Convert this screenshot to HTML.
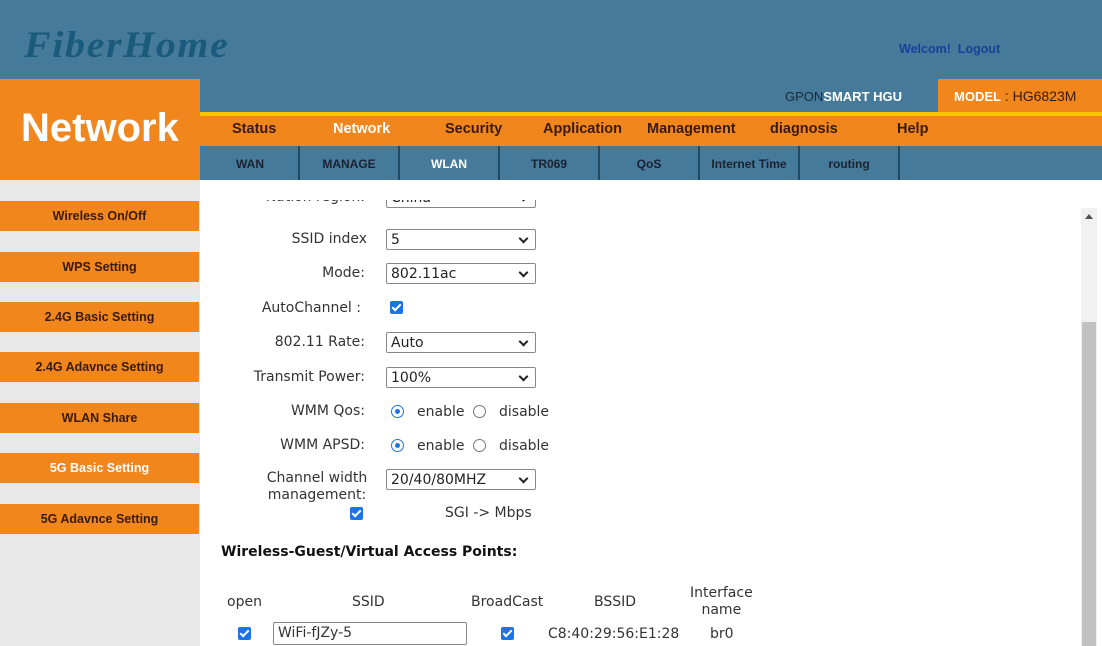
<!DOCTYPE html>
<html><head><meta charset="utf-8"><style>
*{margin:0;padding:0;box-sizing:border-box}
html,body{width:1102px;height:646px;overflow:hidden}
body{position:relative;background:#fff;font-family:"DejaVu Sans","Liberation Sans",sans-serif;}
.a{position:absolute}
.hdr{left:0;top:0;width:1102px;height:180px;background:#467a9b}
.logo{left:24px;top:24px;font-family:"Liberation Serif",serif;font-style:italic;font-weight:bold;font-size:37px;color:#1a5a7a;letter-spacing:1.5px;transform:scaleX(1.08);transform-origin:left}
.b{font-family:"Liberation Sans",sans-serif;font-weight:bold}
.menu{top:112px;left:200px;width:902px;height:34px;background:#f0861c;border-top:4px solid #f7c600}
.mi{top:121px;font-size:14.5px;color:#3a1a08;font-family:"Liberation Sans",sans-serif;font-weight:bold}
.sub{top:146px;left:200px;width:902px;height:34px;background:#467a9b}
.sd{top:146px;width:2px;height:34px;background:#1e4a66}
.si{top:157px;font-size:12px;color:#1a2230;font-family:"Liberation Sans",sans-serif;font-weight:bold;text-align:center;width:100px}
.side{left:0;top:180px;width:200px;height:466px;background:#e8e8e8}
.btn{left:0;width:199px;height:30px;background:#f0861c;color:#3a1a08;font-family:"Liberation Sans",sans-serif;font-weight:bold;font-size:12.5px;text-align:center;line-height:30px}
.lbl{font-size:14px;color:#333;text-align:right;width:200px;left:165px}
.sel{left:386px;width:150px;height:21px;border:1px solid #888;border-radius:2px;font-size:14px;color:#222;padding-left:4px;line-height:21px;background:#fff}
.sel:after{content:"";position:absolute;right:8px;top:5px;width:5px;height:5px;border-right:2px solid #222;border-bottom:2px solid #222;transform:rotate(45deg)}
.cb{width:13px;height:13px;background:#1a73e8;border-radius:2px}
.cb:after{content:"";position:absolute;left:4px;top:1px;width:3px;height:7px;border-right:2px solid #fff;border-bottom:2px solid #fff;transform:rotate(45deg)}
.rd{width:13px;height:13px;border-radius:50%;border:1px solid #777;background:#fff}
.rd.on{border:1.5px solid #1a73e8}
.rd.on:after{content:"";position:absolute;left:2.5px;top:2.5px;width:5px;height:5px;border-radius:50%;background:#1a73e8}
.t{font-size:14px;color:#333}
</style></head><body>
<div class="a hdr"></div>
<div class="a logo">FiberHome</div>
<div class="a b" style="left:899px;top:42px;font-size:12.5px;color:#1a3f9a">Welcom!&nbsp; Logout</div>
<div class="a" style="left:785px;top:89px;font-size:13px;color:#1a2a3a;font-family:'Liberation Sans',sans-serif">GPON<b style="color:#fff">SMART HGU</b></div>
<div class="a" style="left:938px;top:79px;width:164px;height:37px;background:#f0861c"></div>
<div class="a" style="left:954px;top:88px;font-size:14px;color:#3a1a08;font-family:'Liberation Sans',sans-serif"><b style="color:#fff;font-size:13px">MODEL</b> : HG6823M</div>
<div class="a menu"></div>
<div class="a" style="left:0;top:79px;width:200px;height:101px;background:#f0861c"></div>
<div class="a b" style="left:21px;top:106px;font-size:40px;color:#fff">Network</div>
<div class="a mi" style="left:232px">Status</div>
<div class="a mi" style="left:333px;color:#fff">Network</div>
<div class="a mi" style="left:445px">Security</div>
<div class="a mi" style="left:543px">Application</div>
<div class="a mi" style="left:647px">Management</div>
<div class="a mi" style="left:770px">diagnosis</div>
<div class="a mi" style="left:897px">Help</div>
<div class="a sub"></div>
<div class="a sd" style="left:298px"></div><div class="a sd" style="left:398px"></div><div class="a sd" style="left:498px"></div><div class="a sd" style="left:598px"></div><div class="a sd" style="left:698px"></div><div class="a sd" style="left:798px"></div><div class="a sd" style="left:898px"></div>
<div class="a si" style="left:200px">WAN</div>
<div class="a si" style="left:299px">MANAGE</div>
<div class="a si" style="left:399px;color:#fff">WLAN</div>
<div class="a si" style="left:499px">TR069</div>
<div class="a si" style="left:599px">QoS</div>
<div class="a si" style="left:699px">Internet Time</div>
<div class="a si" style="left:799px">routing</div>
<div class="a side"></div>
<div class="a btn" style="top:201px">Wireless On/Off</div>
<div class="a btn" style="top:252px">WPS Setting</div>
<div class="a btn" style="top:302px">2.4G Basic Setting</div>
<div class="a btn" style="top:352px">2.4G Adavnce Setting</div>
<div class="a btn" style="top:403px">WLAN Share</div>
<div class="a btn" style="top:453px;color:#fff">5G Basic Setting</div>
<div class="a btn" style="top:504px">5G Adavnce Setting</div>

<div class="a" style="left:200px;top:180px;width:902px;height:466px;overflow:hidden">
<div class="a" style="left:0;top:20px;width:880px;height:446px;overflow:hidden">
 <div class="a" style="left:0;top:-200px;width:880px;height:700px">
  <div class="a lbl" style="top:189px;left:-35px">Nation region:</div>
  <div class="a sel" style="top:187px;left:186px">China</div>
  <div class="a lbl" style="top:231px;left:-33px">SSID index</div>
  <div class="a sel" style="top:229px;left:186px">5</div>
  <div class="a lbl" style="top:265px;left:-35px">Mode:</div>
  <div class="a sel" style="top:263px;left:186px">802.11ac</div>
  <div class="a lbl" style="top:300px;left:-39px">AutoChannel :</div>
  <div class="a cb" style="top:301px;left:190px"></div>
  <div class="a lbl" style="top:334px;left:-35px">802.11 Rate:</div>
  <div class="a sel" style="top:332px;left:186px">Auto</div>
  <div class="a lbl" style="top:369px;left:-35px">Transmit Power:</div>
  <div class="a sel" style="top:367px;left:186px">100%</div>
  <div class="a lbl" style="top:403px;left:-35px">WMM Qos:</div>
  <div class="a rd on" style="top:405px;left:191px"></div><div class="a t" style="top:404px;left:217px">enable</div>
  <div class="a rd" style="top:405px;left:273px"></div><div class="a t" style="top:404px;left:299px">disable</div>
  <div class="a lbl" style="top:437px;left:-35px">WMM APSD:</div>
  <div class="a rd on" style="top:439px;left:191px"></div><div class="a t" style="top:438px;left:217px">enable</div>
  <div class="a rd" style="top:439px;left:273px"></div><div class="a t" style="top:438px;left:299px">disable</div>
  <div class="a lbl" style="top:470px;line-height:17px;text-align:center;width:130px;left:52px">Channel width<br>management:</div>
  <div class="a sel" style="top:469px;left:186px">20/40/80MHZ</div>
  <div class="a cb" style="top:507px;left:150px"></div>
  <div class="a t" style="top:505px;left:245px">SGI -&gt; Mbps</div>
  <div class="a t" style="top:544px;left:21px;font-weight:bold;color:#111">Wireless-Guest/Virtual Access Points:</div>
  <div class="a t" style="top:594px;left:27px">open</div>
  <div class="a t" style="top:594px;left:152px">SSID</div>
  <div class="a t" style="top:594px;left:271px">BroadCast</div>
  <div class="a t" style="top:594px;left:394px">BSSID</div>
  <div class="a t" style="top:585px;left:490px;text-align:center;line-height:17px">Interface<br>name</div>
  <div class="a cb" style="top:627px;left:38px"></div>
  <div class="a" style="top:622px;left:73px;width:194px;height:23px;border:1px solid #888;border-radius:2px;font-size:14px;color:#333;padding-left:4px;line-height:21px">WiFi-fJZy-5</div>
  <div class="a cb" style="top:627px;left:301px"></div>
  <div class="a t" style="top:626px;left:348px">C8:40:29:56:E1:28</div>
  <div class="a t" style="top:626px;left:510px">br0</div>
 </div>
</div>
<div class="a" style="left:881px;top:28px;width:16px;height:438px;background:#f1f1f1"></div>
<div class="a" style="left:885px;top:34px;width:0;height:0;border-left:4px solid transparent;border-right:4px solid transparent;border-bottom:5px solid #505050"></div>
<div class="a" style="left:882px;top:142px;width:14px;height:324px;background:#c1c1c1"></div>
</div>
</body></html>
